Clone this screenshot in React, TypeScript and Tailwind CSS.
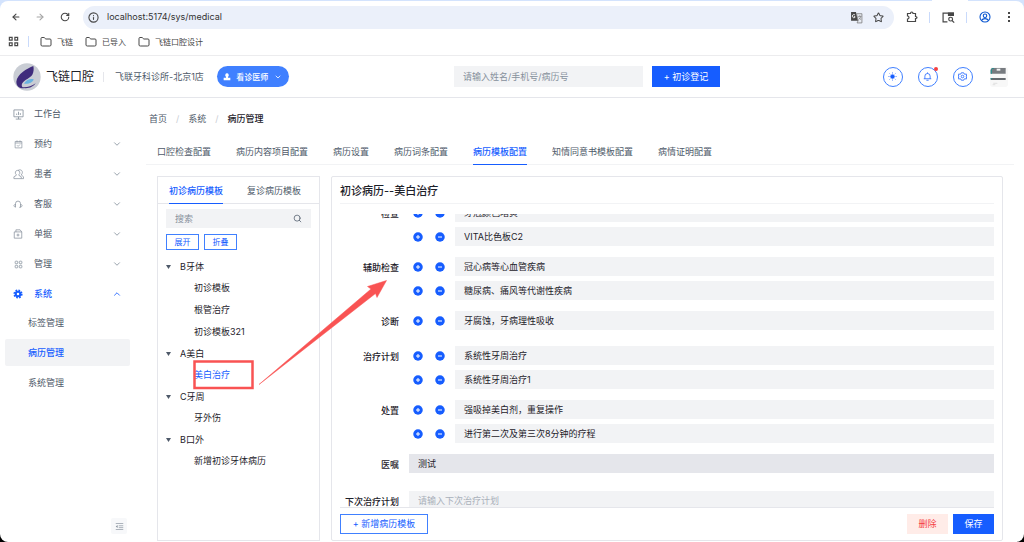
import { useState, type ReactNode } from "react";
import {
  LuArrowLeft,
  LuArrowRight,
  LuChevronDown,
  LuChevronUp,
  LuFolder,
  LuInfo,
  LuRotateCw,
  LuSearch,
  LuStar,
} from "react-icons/lu";

const svgBase = {
  fill: "none",
  stroke: "currentColor",
  viewBox: "0 0 24 24",
  strokeWidth: 1.8,
  "aria-hidden": true,
} as const;

function WorkbenchIcon() {
  return (
    <svg {...svgBase} className="size-[11px]">
      <path d="M2 2h20v15H2zM12 17v5M6 22h12M8 13v-3M12 13V6M16 13V9" />
    </svg>
  );
}
function CalendarIcon() {
  return (
    <svg {...svgBase} className="size-[9px]">
      <path d="M3 4h18v17H3zM3 8h18M8 1v5M16 1v5M8 14l3 3 5-5" />
    </svg>
  );
}
function PatientIcon() {
  return (
    <svg {...svgBase} strokeWidth={1.6} className="size-[11px]">
      <path d="M10 3a5 5 0 0 1 3 9v2l5 3v4H2v-4l5-3v-2a5 5 0 0 1 3-9zM11 3c7-4 13 3 7 10l5 4v4h-5" />
    </svg>
  );
}
function HeadsetIcon() {
  return (
    <svg {...svgBase} className="size-[10px]">
      <path d="M6 20V11a6 6 0 0 1 12 0v9h-3M6 13c-5 0-5 6 0 6M18 13c5 0 5 6 0 6" />
    </svg>
  );
}
function BillIcon() {
  return (
    <svg {...svgBase} className="size-[10px]">
      <path d="M3 7h18v15H3zM7 7V2h10l4 5M12 11v7M8.500 14.500h7" />
    </svg>
  );
}
function ManageIcon() {
  return (
    <svg {...svgBase} strokeWidth={2} className="size-[9px]">
      <rect x="3" y="3" width="7" height="7" rx="2" />
      <rect x="14" y="3" width="7" height="7" rx="2" />
      <rect x="3" y="14" width="7" height="7" rx="2" />
      <rect x="14" y="14" width="7" height="7" rx="2" />
    </svg>
  );
}
function SystemIcon() {
  return (
    <svg {...svgBase} className="size-[10px]">
      <circle cx="12" cy="12" r="5.500" strokeWidth="5" />
      <circle cx="12" cy="12" r="9" strokeWidth="4" strokeDasharray="4 3.07" />
    </svg>
  );
}
function AppsIcon() {
  return (
    <svg {...svgBase} strokeWidth={2.6} className="size-[11px] text-[#474747]">
      <path d="M3 3h6v6H3zM15 3h6v6h-6zM3 15h6v6H3zM15 15h6v6h-6z" />
    </svg>
  );
}
function TranslateIcon() {
  return (
    <svg viewBox="0 0 24 24" className="size-[13px]" aria-hidden>
      <path d="M2 2h9l4 16H2z" fill="#474747" />
      <path d="M12 5h10v17H13l2-4z" fill="#e8ecf3" stroke="#777" strokeWidth="1.4" />
      <path d="M9 7a3 3 0 1 0 0 5V10H7" fill="none" stroke="#fff" strokeWidth="1.6" />
      <path d="M15 10h6M18 8v2M20 10c-1 4-3 5-4 6M16 12l4 4" fill="none" stroke="#777" strokeWidth="1.3" />
    </svg>
  );
}
function PuzzleIcon() {
  return (
    <svg {...svgBase} strokeWidth={2.4} className="size-[12px]">
      <path d="M3 5h6c0-4 5-4 5 0h5v6c4 0 4 4 0 4v6H3v-5c4 0 4-6 0-6z" />
    </svg>
  );
}
function LensIcon() {
  return (
    <svg {...svgBase} strokeWidth={2.2} className="size-[13px]">
      <path d="M10 20H2V4h19v5" />
      <path d="M12 4h9v4h-9z" fill="currentColor" />
      <circle cx="16" cy="15" r="3.500" />
      <path d="M18.500 17.500l4 4" />
    </svg>
  );
}
function ProfileIcon() {
  return (
    <svg {...svgBase} strokeWidth={2.2} className="size-[12px] text-[#0b57d0]">
      <circle cx="12" cy="12" r="10" />
      <circle cx="12" cy="9.500" r="3.500" />
      <path d="M5 19c3-5 11-5 14 0" />
    </svg>
  );
}
function Logo() {
  return (
    <svg viewBox="0 0 84 84" className="size-[28px]" aria-hidden>
      <circle cx="42" cy="42" r="41" fill="#c9cdd4" />
      <path d="M61 9C42 16 12 34 10 56c0 14 10 21 24 20-8-3-10-10-5-17 6-9 22-14 29-24 4-7 5-17 3-26z" fill="#3f2c7c" />
      <path d="M33 62c6-11 17-16 29-13-2 9-14 15-29 13z" fill="#69b3e0" />
      <path d="M22 72c17 3 32-1 46-11-8 12-28 20-46 11z" fill="#3f2c7c" />
    </svg>
  );
}
function DoctorIcon() {
  return (
    <svg viewBox="0 0 24 24" className="size-[8px]" fill="currentColor" aria-hidden>
      <path d="M12 1a5.500 5.500 0 0 1 3 10v3h7v8H2v-8h7v-3a5.500 5.500 0 0 1 3-10z" />
    </svg>
  );
}
function SunIcon() {
  return (
    <svg {...svgBase} className="size-[9px]">
      <circle cx="12" cy="12" r="5" fill="currentColor" />
      <path d="M12 1v3M12 20v3M1 12h3M20 12h3M4 4l2 2M18 18l2 2M4 20l2-2M18 6l2-2" />
    </svg>
  );
}
function BellIcon() {
  return (
    <svg {...svgBase} strokeWidth={2} className="size-[9px]">
      <path d="M5 18v-7a7 7 0 0 1 14 0v7M2 18h20M9 22h6M12 1v3" />
    </svg>
  );
}
function GearIcon() {
  return (
    <svg {...svgBase} strokeWidth={2} className="size-[9px]">
      <path d="M9 2h6l1 3 3 1 3-1 1 6-2 1 2 1-1 6-3-1-3 1-1 3H9l-1-3-3-1-3 1-1-6 2-1-2-1 1-6 3 1 3-1z" />
      <circle cx="12" cy="12" r="3.500" />
    </svg>
  );
}
function Avatar() {
  return (
    <svg viewBox="0 0 54 60" className="h-[20px] w-[18px]" aria-hidden>
      <rect width="54" height="60" rx="9" fill="#f8f8f8" />
      <path d="M8 3h39v17H2V9a6 6 0 0 1 6-6z" fill="#777b80" />
      <path d="M2 8l5-5h5v3H6v14H2z" fill="#2f8d8d" />
      <path d="M20 5h11v6H20z" fill="#f4f4f4" />
      <path d="M2 33h45v6H2z" fill="#666b70" />
      <path d="M2 33h4v4H2z" fill="#2f8d8d" />
      <path d="M10 49h12M8 53h8" stroke="#d5d5d5" strokeWidth="2" />
    </svg>
  );
}

const menu: { label: string; icon: ReactNode; state?: "closed" | "open" }[] = [
  { label: "工作台", icon: <WorkbenchIcon /> },
  { label: "预约", icon: <CalendarIcon />, state: "closed" },
  { label: "患者", icon: <PatientIcon />, state: "closed" },
  { label: "客服", icon: <HeadsetIcon />, state: "closed" },
  { label: "单据", icon: <BillIcon />, state: "closed" },
  { label: "管理", icon: <ManageIcon />, state: "closed" },
  { label: "系统", icon: <SystemIcon />, state: "open" },
];
const subMenu = ["标签管理", "病历管理", "系统管理"];

const configTabs = [
  "口腔检查配置",
  "病历内容项目配置",
  "病历设置",
  "病历词条配置",
  "病历模板配置",
  "知情同意书模板配置",
  "病情证明配置",
];

const tree = [
  { name: "B牙体", items: ["初诊模板", "根管治疗", "初诊模板321"] },
  { name: "A美白", items: ["美白治疗"] },
  { name: "C牙周", items: ["牙外伤"] },
  { name: "B口外", items: ["新增初诊牙体病历"] },
];

const sections = [
  { label: "检查", values: ["牙冠颜色暗黄", "VITA比色板C2"] },
  { label: "辅助检查", values: ["冠心病等心血管疾病", "糖尿病、痛风等代谢性疾病"] },
  { label: "诊断", values: ["牙腐蚀，牙病理性吸收"] },
  { label: "治疗计划", values: ["系统性牙周治疗", "系统性牙周治疗1"] },
  { label: "处置", values: ["强吸掉美白剂，重复操作", "进行第二次及第三次8分钟的疗程"] },
];

function RoundButton({ sign, label }: { sign: "plus" | "minus"; label: string }) {
  return (
    <button type="button" aria-label={label} className="flex h-[19px] w-[22px] shrink-0 items-center justify-center text-[#165dff]">
      <svg viewBox="0 0 20 20" className="size-[10px]" aria-hidden>
        <circle cx="10" cy="10" r="9.500" fill="currentColor" />
        <path d={sign === "plus" ? "M10 6v8M6 10h8" : "M6 10h8"} stroke="#fff" strokeWidth="2" />
      </svg>
    </button>
  );
}

function BrowserBar() {
  return (
    <div className="relative bg-[#d3e3fd] pt-px">
      <span className="absolute top-0 right-[56px] h-1 w-[36px] bg-white" />
      <div className="relative rounded-t-lg border-b border-[#ececee] bg-white">
        <div className="flex h-[31px] items-center pt-px pr-[10px] pl-[5px] text-[#474747]">
          <button type="button" aria-label="后退" className="px-[6px]"><LuArrowLeft className="size-[10px]" strokeWidth={2.6} /></button>
          <button type="button" aria-label="前进" className="px-[8px] text-[#a5a5a5]"><LuArrowRight className="size-[10px]" strokeWidth={2.6} /></button>
          <button type="button" aria-label="刷新" className="px-[7px]"><LuRotateCw className="size-[10px]" strokeWidth={2.6} /></button>
          <div className="ml-[6px] flex h-[23px] flex-1 items-center rounded-full bg-[#ebf0fa] pr-[10px] pl-[5px]">
            <LuInfo className="size-[11px]" strokeWidth={2.4} />
            <input
              aria-label="地址"
              defaultValue="localhost:5174/sys/medical"
              className="ml-[8px] min-w-0 flex-1 bg-transparent text-[9px] text-[#333] outline-none"
            />
            <button type="button" aria-label="翻译"><TranslateIcon /></button>
            <button type="button" aria-label="收藏" className="ml-[10px]"><LuStar className="size-[11px]" strokeWidth={2.2} /></button>
          </div>
          <button type="button" aria-label="扩展程序" className="ml-[12px]"><PuzzleIcon /></button>
          <span className="ml-[11px] h-[11px] w-px bg-[#c9dafb]" />
          <button type="button" aria-label="搜索标签页" className="ml-[12px]"><LensIcon /></button>
          <span className="ml-[11px] h-[11px] w-px bg-[#c9dafb]" />
          <button type="button" aria-label="个人资料" className="ml-[12px]"><ProfileIcon /></button>
          <button type="button" aria-label="菜单" className="ml-[12px] flex w-[11px] flex-col items-center gap-[2px]">
            <i className="size-[2px] bg-[#474747]" />
            <i className="size-[2px] bg-[#474747]" />
            <i className="size-[2px] bg-[#474747]" />
          </button>
        </div>
        <nav className="flex h-[23px] items-center pb-[4px] pl-[8px] text-[8px] text-[#474747]">
          <button type="button" aria-label="应用"><AppsIcon /></button>
          <span className="mr-[11px] ml-[9px] h-[11px] w-px bg-[#c9dafb]" />
          <div className="flex gap-[12px]">
            {["飞链", "已导入", "飞链口腔设计"].map((b) => (
              <a key={b} href="#bookmark" className="flex items-center gap-[5px]">
                <LuFolder className="size-[12px]" />
                {b}
              </a>
            ))}
          </div>
        </nav>
      </div>
    </div>
  );
}

function AppHeader() {
  const ring = "relative flex size-[20px] items-center justify-center rounded-full border border-[#4080ff] text-[#165dff]";
  return (
    <header className="flex h-[42px] shrink-0 items-center justify-between border-b border-[#e5e6eb] pr-[16px] pl-[13px]">
      <div className="flex items-center">
        <Logo />
        <span className="ml-[5px] text-[12px] text-[#1d2129]">飞链口腔</span>
        <span className="ml-[9px] h-[10px] w-px bg-[#e5e6eb]" />
        <span className="ml-[11px] text-[9px] text-[#4e5969]">飞联牙科诊所-北京1店</span>
        <button type="button" className="ml-[13px] flex h-[21px] w-[72px] items-center justify-center rounded-full bg-[#4080ff] text-[8px] font-medium text-white">
          <DoctorIcon />
          <span className="mr-[6px] ml-[5px]">看诊医师</span>
          <LuChevronDown className="size-[8px]" strokeWidth={2.4} />
        </button>
      </div>
      <div className="flex items-center gap-[9px] pl-[2px]">
        <input
          aria-label="搜索患者"
          placeholder="请输入姓名/手机号/病历号"
          className="h-[21px] w-[189px] bg-[#f2f3f5] px-[9px] text-[9px] outline-none placeholder:text-[#86909c]"
        />
        <button type="button" className="h-[21px] w-[68px] bg-[#165dff] text-[9px] text-white">+ 初诊登记</button>
      </div>
      <div className="flex items-center gap-[15px]">
        <button type="button" aria-label="主题" className={ring}><SunIcon /></button>
        <button type="button" aria-label="通知" className={ring}>
          <BellIcon />
          <span className="absolute -top-[1px] -right-[1px] size-[4px] rounded-full bg-[#f53f3f]" />
        </button>
        <button type="button" aria-label="设置" className={ring}><GearIcon /></button>
        <span className="pl-[2px]"><Avatar /></span>
      </div>
    </header>
  );
}

function Sidebar() {
  return (
    <aside className="flex w-[140px] shrink-0 flex-col pt-px text-[9px] text-[#4e5969]">
      <nav>
        {menu.map((m) => (
          <button
            key={m.label}
            type="button"
            className={`flex h-[30px] w-full items-center pr-[18px] pl-[12px] ${m.state === "open" ? "font-medium text-[#165dff]" : ""}`}
          >
            <span className={`flex w-[12px] justify-center ${m.state === "open" ? "" : "text-[#86909c]"}`}>{m.icon}</span>
            <span className="ml-[10px] flex-1 text-left">{m.label}</span>
            {m.state === "closed" && <LuChevronDown className="size-[10px] text-[#86909c]" />}
            {m.state === "open" && <LuChevronUp className="size-[10px]" />}
          </button>
        ))}
        {subMenu.map((s) => (
          <a
            key={s}
            href="#menu"
            className={`mr-[10px] mb-[3px] ml-[5px] flex h-[27px] items-center pl-[23px] ${s === "病历管理" ? "rounded-xs bg-[#f2f3f5] font-medium text-[#165dff]" : ""}`}
          >
            {s}
          </a>
        ))}
      </nav>
      <button type="button" aria-label="收起菜单" className="mt-auto mr-[13px] mb-[8px] flex size-[16px] items-center justify-center self-end rounded-xs bg-[#f7f8fa] text-[#86909c]">
        <svg {...svgBase} className="size-[9px]">
          <path d="M2 4h20M10 10h12M10 15h12M2 20h20" />
          <path d="M2 12l5-4v8z" fill="currentColor" stroke="none" />
        </svg>
      </button>
    </aside>
  );
}

function TemplatePanel({ selected, onSelect }: { selected: string; onSelect: (s: string) => void }) {
  return (
    <section className="flex w-[163px] shrink-0 flex-col border border-[#e5e6eb] text-[9px]">
      <div className="flex h-[27px] shrink-0 gap-[24px] border-b border-[#e5e6eb] pl-[11px] text-[#4e5969]">
        <button type="button" className="-mb-px border-b border-[#165dff] pt-[2px] font-medium text-[#165dff]">初诊病历模板</button>
        <button type="button" className="pt-px">复诊病历模板</button>
      </div>
      <div className="px-[8px] pt-[5px]">
        <label className="flex h-[19px] items-center bg-[#f2f3f5] px-[9px]">
          <input aria-label="搜索模板" placeholder="搜索" className="min-w-0 flex-1 bg-transparent outline-none placeholder:text-[#86909c]" />
          <LuSearch className="size-[9px] text-[#4e5969]" />
        </label>
        <div className="mt-[6px] flex gap-[5px] text-[8px] text-[#165dff]">
          <button type="button" className="h-[16px] w-[33px] border border-[#4080ff]">展开</button>
          <button type="button" className="h-[16px] w-[33px] border border-[#4080ff]">折叠</button>
        </div>
      </div>
      <ul className="mt-[6px] text-[#1d2129]">
        {tree.map((g) => (
          <li key={g.name}>
            <button type="button" className="flex h-[21px] items-center pl-[8px]">
              <svg viewBox="0 0 10 8" className="h-[4px] w-[5px] text-[#4e5969]" aria-hidden>
                <path d="M0 0h10L5 8z" fill="currentColor" />
              </svg>
              <span className="ml-[9px]">{g.name}</span>
            </button>
            <ul>
              {g.items.map((item) => (
                <li key={item}>
                  <button
                    type="button"
                    onClick={() => onSelect(item)}
                    className={`flex h-[22px] items-center pl-[36px] ${item === selected ? "text-[#165dff]" : ""}`}
                  >
                    {item}
                  </button>
                </li>
              ))}
            </ul>
          </li>
        ))}
      </ul>
    </section>
  );
}

function RecordPanel() {
  const field = "h-[19px] w-full min-w-0 px-[9px] text-[9px] outline-none placeholder:text-[#a9b0ba]";
  const caption = "w-[59px] shrink-0 text-right text-[9px] leading-[22px] font-medium";
  return (
    <section className="flex min-w-0 flex-1 flex-col rounded-xs border border-[#e5e6eb] px-[8px] text-[#1d2129]">
      <h2 className="flex h-[27px] shrink-0 items-center border-b border-[#f2f3f5] pt-[2px] text-[11px] font-medium">初诊病历--美白治疗</h2>
      <div className="mt-[10px] min-h-0 flex-1 overflow-hidden">
        <div className="-mt-[11px] flex flex-col gap-[11px]">
          {sections.map((s) => (
            <div key={s.label} className={`flex items-start ${s.values.length === 1 ? "min-h-[24px]" : ""}`}>
              <span className={caption}>{s.label}</span>
              <div className="ml-[8px] flex min-w-0 flex-1 flex-col gap-[5px]">
                {s.values.map((v) => (
                  <div key={v} className="flex">
                    <RoundButton sign="plus" label="新增一行" />
                    <RoundButton sign="minus" label="删除一行" />
                    <input aria-label={s.label} defaultValue={v} className={`${field} ml-[4px] bg-[#f2f3f5]`} />
                  </div>
                ))}
              </div>
            </div>
          ))}
          <div className="flex min-h-[26px] items-start">
            <label htmlFor="advice" className={caption}>医嘱</label>
            <input id="advice" defaultValue="测试" className={`${field} ml-[10px] bg-[#e5e6eb]`} />
          </div>
          <div className="flex items-start">
            <label htmlFor="next-plan" className={caption}>下次治疗计划</label>
            <input id="next-plan" placeholder="请输入下次治疗计划" className={`${field} ml-[10px] bg-[#f2f3f5]`} />
          </div>
        </div>
      </div>
      <footer className="flex h-[33px] shrink-0 items-start gap-[5px] border-t border-[#e5e6eb] pt-[6px] text-[9px]">
        <button type="button" className="mr-auto h-[20px] w-[88px] border border-[#4080ff] text-[#165dff]">+ 新增病历模板</button>
        <button type="button" className="h-[20px] w-[41px] bg-[#ffece8] text-[#f53f3f]">删除</button>
        <button type="button" className="h-[20px] w-[41px] bg-[#165dff] text-white">保存</button>
      </footer>
    </section>
  );
}

export default function App() {
  const [selected, setSelected] = useState("美白治疗");
  return (
    <div className="h-screen bg-black font-[Inter,'Noto_Sans_CJK_SC',sans-serif]">
      <div className="relative flex h-full flex-col overflow-hidden rounded-b-lg bg-white">
        <BrowserBar />
        <AppHeader />
        <div className="flex min-h-0 flex-1">
          <Sidebar />
          <main className="flex min-w-0 flex-1 flex-col pr-[10px] pb-px pl-[6px] text-[9px] text-[#4e5969]">
            <nav aria-label="面包屑" className="flex h-[42px] shrink-0 items-center gap-[9px] pl-[3px]">
              <a href="#home">首页</a>
              <span className="text-[#c9cdd4]">/</span>
              <a href="#system">系统</a>
              <span className="text-[#c9cdd4]">/</span>
              <span className="font-medium text-[#1d2129]">病历管理</span>
            </nav>
            <div className="flex h-[25px] shrink-0 gap-[25px] border-b border-[#f2f3f5] pl-[11px]">
              {configTabs.map((t) => (
                <button
                  key={t}
                  type="button"
                  className={`-mb-px border-b ${t === "病历模板配置" ? "border-[#165dff] font-medium text-[#165dff]" : "border-transparent"}`}
                >
                  {t}
                </button>
              ))}
            </div>
            <div className="mt-[11px] flex min-h-0 flex-1 gap-[11px] pr-[11px] pl-[11px]">
              <TemplatePanel selected={selected} onSelect={setSelected} />
              <RecordPanel />
            </div>
          </main>
        </div>
        <svg viewBox="0 0 200 120" className="pointer-events-none absolute top-[275px] left-[190px] h-[120px] w-[200px]" aria-hidden>
          <rect x="4.500" y="86.500" width="58" height="26.500" fill="none" stroke="#f95353" strokeWidth="2.500" />
          <path d="M69 109.500L181 14l-3.500-2.500L196.500 5.500 187 22.500l-1.500-4z" fill="#f95353" stroke="#f95353" strokeWidth="0.500" />
        </svg>
      </div>
    </div>
  );
}
